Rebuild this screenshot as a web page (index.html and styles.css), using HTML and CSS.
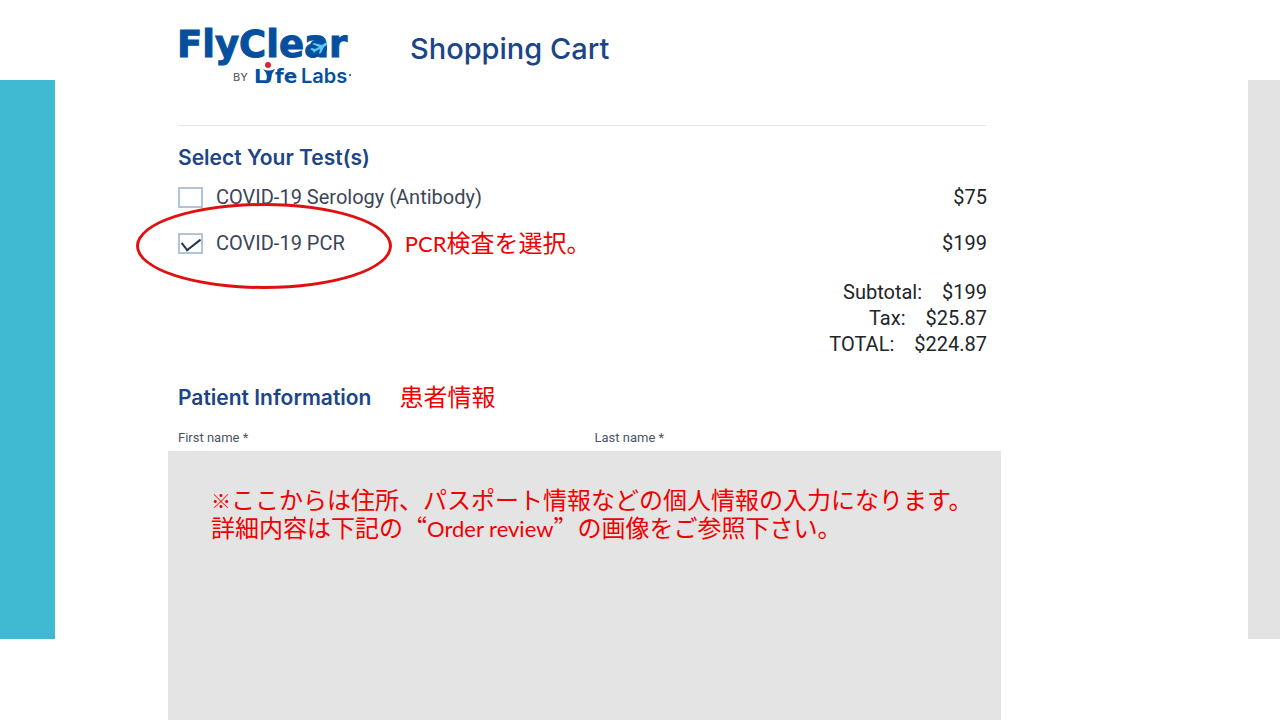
FILE: index.html
```html
<!DOCTYPE html>
<html lang="ja">
<head>
    <meta charset="UTF-8">
    <meta name="viewport" content="width=device-width, initial-scale=1.0">
    <title>Shopping Cart</title>
    <link rel="stylesheet" href="styles.css">
</head>
<body>
    <div class="slide">
        <div class="bar bar-left"></div>
        <main class="cart">
            <header class="cart-header">
                <svg class="logo" width="176" height="74" viewBox="0 0 176 74" role="img" aria-label="FlyClear by LifeLabs">
                    <text class="logo-name" x="-1" y="37">FlyClear</text>
                    <!-- plane over the "a" -->
                    <circle class="logo-disc" cx="140" cy="28" r="9"/>
                    <path class="logo-plane" d="M132 29 L134 28 L137 29 L141 27 L134 24 L136 23 L144 25 L147 23 Q150 22 149 25 L146 27 L143 33 L141 34 L142 29 L138 31 L136 33 L135 31 Z"/>
                    <text class="logo-by" x="55" y="61">BY</text>
                    <text class="logo-lab" x="76" y="63">L</text>
                    <!-- figure that stands for the "i" -->
                    <circle class="logo-head" cx="90" cy="45" r="3"/>
                    <path class="logo-body" d="M85 49 Q90 52 97 49 L94 54 L93 60 Q91 64 87 63 Q90 58 88 53 Z"/>
                    <text class="logo-lab" x="97" y="63">fe</text>
                    <text class="logo-labs" x="123" y="63">Labs</text>
                    <circle class="logo-mark" cx="172" cy="55" r="1"/>
                </svg>
                <h1>Shopping Cart</h1>
            </header>

            <section class="tests">
                <h2>Select Your Test(s)</h2>
                <div class="test">
                    <input type="checkbox" id="serology">
                    <label for="serology">COVID-19 Serology (Antibody)</label>
                    <span class="price">$75</span>
                </div>
                <div class="test">
                    <input type="checkbox" id="pcr" checked>
                    <label for="pcr">COVID-19 PCR</label>
                    <span class="note test-note"><span class="latin">PCR</span>検査を選択。</span>
                    <span class="price">$199</span>
                    <span class="circle"></span>
                </div>
                <dl class="totals">
                    <div><dt>Subtotal:</dt><dd>$199</dd></div>
                    <div><dt>Tax:</dt><dd>$25.87</dd></div>
                    <div><dt>TOTAL:</dt><dd>$224.87</dd></div>
                </dl>
            </section>

            <section class="patient">
                <div class="patient-title">
                    <h2>Patient Information</h2>
                    <span class="note">患者情報</span>
                </div>
                <div class="patient-form">
                    <div class="field">
                        <label for="first-name">First name *</label>
                        <input type="text" id="first-name">
                    </div>
                    <div class="field">
                        <label for="last-name">Last name *</label>
                        <input type="text" id="last-name">
                    </div>
                    <div class="cover note">
                        <span class="mark">※</span>ここからは住所、パスポート情報などの個人情報の入力になります。<br>
                        詳細内容は下記の<span class="quote">“</span><span class="latin">Order review</span><span class="quote">”</span>の画像をご参照下さい。
                    </div>
                </div>
            </section>
        </main>
        <div class="bar bar-right"></div>
    </div>
</body>
</html>
```
FILE: styles.css
```css
* {
    box-sizing: border-box;
}
body {
    margin: 0;
    background: #fff;
    color: #212529;
    font-family: Roboto, "Noto Sans CJK JP", sans-serif;
    font-size: 20px;
    line-height: 24px;
}
h1,
h2 {
    margin: 0;
    color: #1b4587;
    font-family: Inter, sans-serif;
}
h1 {
    font-size: 29px;
    font-weight: 500;
    line-height: 58px;
}
h2 {
    font-size: 21px;
    font-weight: 600;
    line-height: 24px;
}

/* Slide with the coloured bars on both sides */
.slide {
    display: grid;
    grid-template-columns: 55px 1fr 32px;
    min-height: 100vh;
}
.bar {
    margin: 80px 0 81px;
}
.bar-left {
    background: #40b9d2;
}
.bar-right {
    background: #e3e3e3;
}
.cart {
    display: flex;
    flex-direction: column;
    width: 100%;
    max-width: 946px;
    padding: 20px 14px 0 123px;
}

/* Header */
.cart-header {
    display: flex;
    align-items: flex-start;
    gap: 56px;
    height: 106px;
    border-bottom: 1px solid #e4e6e8;
}
.logo {
    flex: none;
    overflow: visible;
}
.logo-name {
    fill: #064f9e;
    stroke: #064f9e;
    stroke-width: 1;
    font: bold 37px "DejaVu Sans", sans-serif;
}
.logo-plane {
    fill: #5cc5f2;
}
.logo-by {
    fill: #666;
    font: 500 11px Inter, sans-serif;
}
.logo-lab {
    fill: #064f9e;
    font: bold 20px "DejaVu Sans", sans-serif;
}
.logo-labs {
    fill: #064f9e;
    font: 600 20px Inter, sans-serif;
}
.logo-head {
    fill: #e11f35;
}
.logo-body,
.logo-disc,
.logo-mark {
    fill: #064f9e;
}

/* Tests */
.tests {
    padding-top: 20px;
}
.tests h2 {
    margin-bottom: 15px;
}
.test {
    position: relative;
    display: flex;
    align-items: center;
    height: 24px;
    margin-bottom: 22px;
}
.test label {
    margin-left: 13px;
    color: #3b4658;
}
.test input {
    appearance: none;
    display: flex;
    justify-content: center;
    width: 25px;
    height: 21px;
    margin: 0;
    border: 2px solid #b4c4d8;
    background: #fff;
}
.test input:checked::after {
    content: "";
    width: 16px;
    height: 8px;
    margin-top: 2px;
    border: solid #27364b;
    border-width: 0 0 2px 2px;
    transform: rotate(-38deg);
}
.price {
    margin-left: auto;
}
.circle {
    position: absolute;
    top: -28px;
    left: -42px;
    width: 256px;
    height: 86px;
    border: 3px solid #e01010;
    border-radius: 50%;
    pointer-events: none;
}
.totals {
    margin: 24px 0 0;
    line-height: 26px;
}
.totals div {
    display: flex;
    justify-content: flex-end;
    gap: 20px;
}
.totals dd {
    margin: 0;
}

/* Red notes */
.note {
    color: #f00000;
    font-family: "Noto Sans CJK JP", sans-serif;
    font-size: 24px;
    line-height: 28px;
}
.note .latin {
    font-family: Lato, sans-serif;
    font-size: 22px;
}
.note .mark {
    font-size: 20px;
    line-height: 20px;
}
.note .quote {
    font-variant-east-asian: full-width;
}
.test-note {
    margin-left: 60px;
}

/* Patient information */
.patient {
    display: flex;
    flex: 1;
    flex-direction: column;
    padding-top: 29px;
}
.patient-title {
    display: flex;
    align-items: flex-end;
    gap: 28px;
    height: 24px;
    margin-bottom: 20px;
}
.patient-form {
    position: relative;
    display: grid;
    flex: 1;
    grid-template-columns: 1fr 1fr;
    gap: 24px;
    align-content: start;
}
.field label {
    display: block;
    color: #4a5568;
    font-size: 13px;
    line-height: 16px;
}
.field input {
    width: 100%;
    height: 36px;
    margin-top: 6px;
    border: 1px solid #b4c4d8;
}
.cover {
    position: absolute;
    inset: 21px -14px 0 -10px;
    padding: 34px 0 0 43px;
    background: #e4e4e4;
}
```
